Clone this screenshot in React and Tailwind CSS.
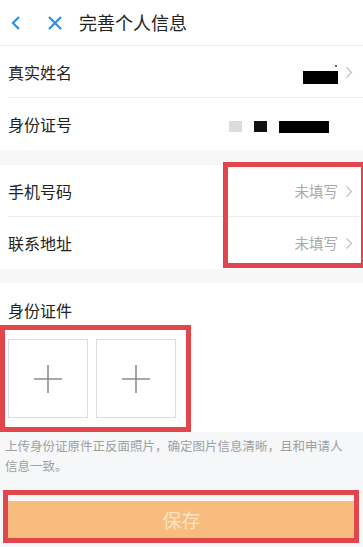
import React from 'react';

const font = { fontFamily: '"Noto Sans CJK SC", "Noto Sans", sans-serif' };

function Chevron() {
  return (
    <svg width="8" height="13" viewBox="0 0 8 13" className="shrink-0">
      <path d="M1.5 1.5 L6.5 6.5 L1.5 11.5" fill="none" stroke="#c4c4c8" strokeWidth="1.4" />
    </svg>
  );
}

function Row({ label, children, last }) {
  return (
    <div className="relative flex h-[52px] items-center justify-between pl-2 pr-[10px]">
      <span className="text-[16px] text-[#222]">{label}</span>
      <div className="flex items-center gap-[7px]">{children}</div>
      {!last && <div className="absolute bottom-0 left-2 right-0 h-px bg-[#ececec]" />}
    </div>
  );
}

function PlusBox() {
  return (
    <div className="flex h-[79px] w-[80px] items-center justify-center border border-[#dcdcdc] bg-white">
      <svg width="30" height="30" viewBox="0 0 30 30">
        <path d="M15 1 V29 M1 15 H29" stroke="#8a8a8a" strokeWidth="1.6" />
      </svg>
    </div>
  );
}

export default function App() {
  return (
    <div className="relative h-[547px] w-[363px] overflow-hidden bg-[#f6f7f9]" style={font}>
      <div className="flex h-[46px] items-center border-b border-[#ececec] bg-white">
        <svg width="14" height="16" viewBox="0 0 14 16" className="ml-[9px]">
          <path d="M10 2 L4 8 L10 14" fill="none" stroke="#2c8fe6" strokeWidth="2.2" />
        </svg>
        <svg width="16" height="16" viewBox="0 0 16 16" className="ml-[24px]">
          <path d="M2 2 L14 14 M14 2 L2 14" stroke="#2c8fe6" strokeWidth="2.2" />
        </svg>
        <span className="ml-[16px] text-[18px] text-[#222]">完善个人信息</span>
      </div>

      <div className="bg-white">
        <Row label="真实姓名">
          <div className="relative mt-[10px] h-[13px] w-[35px] bg-black">
            <div className="absolute -top-[6px] right-[1px] h-[2px] w-[2px] bg-[#666]" />
          </div>
          <Chevron />
        </Row>
        <Row label="身份证号" last>
          <div className="mr-[24px] mt-[5px] flex items-center">
            <div className="h-[11px] w-[13px] bg-[#dcdcdc]" />
            <div className="ml-[12px] h-[11px] w-[13px] bg-[#111]" />
            <div className="ml-[12px] h-[12px] w-[50px] bg-black" />
          </div>
        </Row>
      </div>

      <div className="mt-[15px] bg-white">
        <Row label="手机号码">
          <span className="text-[14.5px] text-[#aaa]">未填写</span>
          <Chevron />
        </Row>
        <Row label="联系地址" last>
          <span className="text-[14.5px] text-[#aaa]">未填写</span>
          <Chevron />
        </Row>
      </div>

      <div className="mt-[14px] bg-white px-2 pb-[14px] pt-[16px]">
        <div className="text-[16px] leading-[22px] text-[#222]">身份证件</div>
        <div className="mt-[18px] flex gap-2">
          <PlusBox />
          <PlusBox />
        </div>
      </div>

      <p className="pl-[5px] pr-[18px] pt-[4px] text-[12.5px] leading-[20px] text-[#a0a0a0]">
        上传身份证原件正反面照片，确定图片信息清晰，且和申请人信息一致。
      </p>

      <div className="mx-[8px] mt-[25px] flex h-[42px] items-center justify-center bg-[#f8bd7e]">
        <span className="-mt-[4px] text-[19px] text-[#fde3c6]">保存</span>
      </div>

      {/* red annotation frames */}
      <div className="pointer-events-none absolute left-[223px] top-[162px] h-[106px] w-[143px] border-[5px] border-[#e0464b]" />
      <div className="pointer-events-none absolute left-0 top-[325px] h-[107px] w-[191px] border-[5px] border-[#e0464b]" />
      <div className="pointer-events-none absolute left-[3px] top-[490px] h-[53px] w-[356px] border-[5px] border-[#e0464b]" />
    </div>
  );
}
